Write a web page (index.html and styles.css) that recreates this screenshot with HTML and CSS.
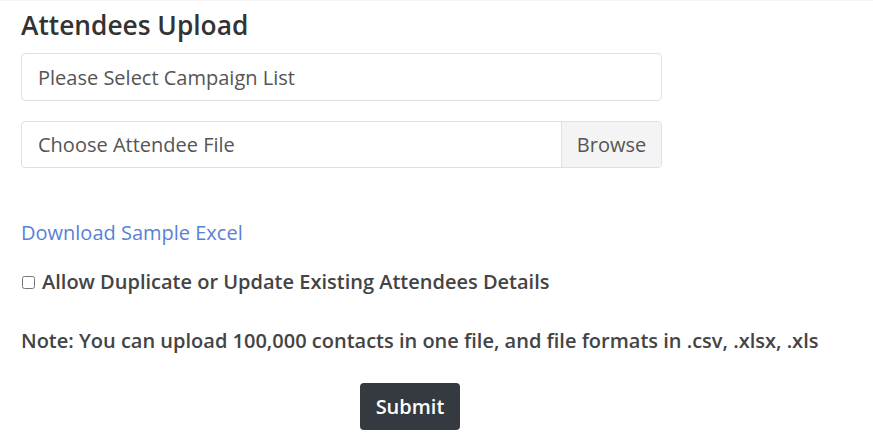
FILE: index.html
```html
<!DOCTYPE html>
<html>
<head>
<meta charset="utf-8">
<link rel="stylesheet" href="styles.css">
</head>
<body>
<div class="page">
  <h2 class="title">Attendees Upload</h2>
  <div class="form">
    <div class="select">Please Select Campaign List</div>
    <div class="file">
      <span class="file-label">Choose Attendee File</span>
      <span class="browse">Browse</span>
    </div>
    <a class="link" href="#">Download Sample Excel</a>
    <label class="check"><input type="checkbox"> Allow Duplicate or Update Existing Attendees Details</label>
    <p class="note">Note: You can upload 100,000 contacts in one file, and file formats in .csv, .xlsx, .xls</p>
    <div class="actions"><button class="submit">Submit</button></div>
  </div>
</div>
</body>
</html>
```
FILE: styles.css
```css
html, body { margin: 0; padding: 0; background: #fff; }
body { font-family: "Open Sans", "Noto Sans", sans-serif; color: #444; border-top: 1px solid #f4f4f4; }
.page { padding: 0 21px; }
.title { margin: 0; padding-top: 6px; font-size: 26.3px; font-weight: 600; color: #333; line-height: 36px; }
.form { width: 641px; display: flex; flex-direction: column; }
.select { margin-top: 10px; height: 46px; border: 1px solid #e0e0e0; border-radius: 4px; display: flex; align-items: center; padding-left: 16px; font-size: 20px; color: #555; }
.file { margin-top: 20px; height: 45px; border: 1px solid #e0e0e0; border-radius: 4px; display: flex; align-items: stretch; font-size: 20px; color: #555; }
.file-label { flex: 1; display: flex; align-items: center; padding-left: 16px; }
.browse { width: 99px; background: #f4f4f4; border-left: 1px solid #e0e0e0; display: flex; align-items: center; justify-content: center; border-radius: 0 4px 4px 0; }
.link { margin-top: 53px; font-size: 20px; color: #5a7fd8; text-decoration: none; line-height: 24px; align-self: flex-start; }
.check { margin-top: 25px; font-size: 20px; font-weight: 600; color: #444; display: flex; align-items: center; gap: 7px; line-height: 24px; }
.check input { margin: 0 0 0 1px; width: 13px; height: 13px; }
.note { margin: 35px 0 0; font-size: 20px; font-weight: 600; color: #444; line-height: 24px; white-space: nowrap; }
.actions { margin-top: 30px; padding-left: 339px; }
.submit { width: 100px; height: 47px; background: #343a40; color: #fff; border: none; border-radius: 4px; font-family: inherit; font-size: 20px; font-weight: 600; }
```
